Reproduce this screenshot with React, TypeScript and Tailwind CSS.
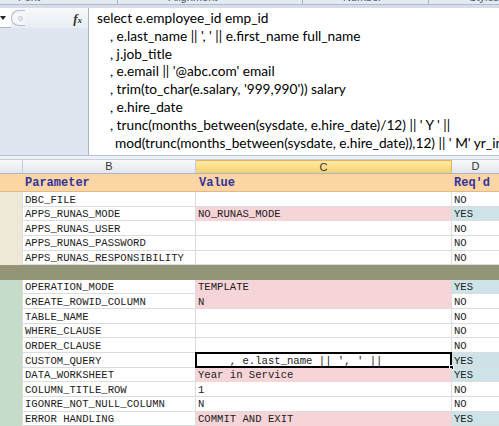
const mono = "font-['Liberation_Mono','Courier_New',monospace]";

type Row = {
  name: string;
  value?: string;
  pink?: boolean;
  req: "YES" | "NO";
  section: "a" | "b";
  selected?: boolean;
};

const rows: (Row | "bar")[] = [
  { name: "DBC_FILE", req: "NO", section: "a" },
  { name: "APPS_RUNAS_MODE", value: "NO_RUNAS_MODE", pink: true, req: "YES", section: "a" },
  { name: "APPS_RUNAS_USER", req: "NO", section: "a" },
  { name: "APPS_RUNAS_PASSWORD", req: "NO", section: "a" },
  { name: "APPS_RUNAS_RESPONSIBILITY", req: "NO", section: "a" },
  "bar",
  { name: "OPERATION_MODE", value: "TEMPLATE", pink: true, req: "YES", section: "b" },
  { name: "CREATE_ROWID_COLUMN", value: "N", pink: true, req: "NO", section: "b" },
  { name: "TABLE_NAME", req: "NO", section: "b" },
  { name: "WHERE_CLAUSE", req: "NO", section: "b" },
  { name: "ORDER_CLAUSE", req: "NO", section: "b" },
  { name: "CUSTOM_QUERY", value: "     , e.last_name || ', ' ||", req: "YES", section: "b", selected: true },
  { name: "DATA_WORKSHEET", value: "Year in Service", pink: true, req: "YES", section: "b" },
  { name: "COLUMN_TITLE_ROW", value: "1", req: "NO", section: "b" },
  { name: "IGONRE_NOT_NULL_COLUMN", value: "N", req: "NO", section: "b" },
  { name: "ERROR HANDLING", value: "COMMIT AND EXIT", pink: true, req: "YES", section: "b" },
];

const sql = [
  { t: "select e.employee_id emp_id", pl: "pl-0" },
  { t: ", e.last_name || ', ' || e.first_name full_name", pl: "pl-[13px]" },
  { t: ", j.job_title", pl: "pl-[13px]" },
  { t: ", e.email || '@abc.com' email", pl: "pl-[13px]" },
  { t: ", trim(to_char(e.salary, '999,990')) salary", pl: "pl-[13px]" },
  { t: ", e.hire_date", pl: "pl-[13px]" },
  { t: ", trunc(months_between(sysdate, e.hire_date)/12) || ' Y ' ||", pl: "pl-[13px]" },
  { t: "mod(trunc(months_between(sysdate, e.hire_date)),12) || ' M' yr_in_service", pl: "pl-[18px]" },
];

function FormulaBar() {
  return (
    <div className="flex h-[148px] shrink-0 border-b border-[#b6c2d2]">
      <div className="flex w-[88px] shrink-0 flex-col bg-[#dfe6ef]">
        <div className="flex h-[20px] items-stretch bg-gradient-to-b from-[#f7f9fb] to-[#e9eef4]">
          <div className="flex w-[11px] items-center border-b border-[#a9b5c4] bg-white">
            <span className="h-0 w-0 border-x-[3px] border-t-[4px] border-x-transparent border-t-[#222]" />
          </div>
          <div className="my-[2px] flex w-[14px] items-center rounded-l-full border-y border-l border-[#b3bccb] bg-[#f4f6f9] pl-[6px]">
            <span className="h-[5px] w-[5px] rounded-full border border-[#c4cad4] bg-[#e6eaf0]" />
          </div>
          <div className="flex flex-1 items-center justify-end pr-[6px]">
            <span className="font-['Liberation_Serif',serif] text-[13px] font-bold italic leading-none text-[#333]">
              f<span className="text-[9px]">x</span>
            </span>
          </div>
        </div>
      </div>
      <div className="flex-1 overflow-hidden whitespace-pre border-l border-[#aab6c6] bg-white pl-[8px] pt-[1px] font-['Lato','Noto_Sans',sans-serif] text-[13.7px] leading-[17.8px] text-black">
        {sql.map((l, i) => (
          <div key={i} className={l.pl}>
            {l.t}
          </div>
        ))}
      </div>
    </div>
  );
}

function ColHeaders() {
  const base =
    "flex shrink-0 items-center justify-center border-r border-[#c5ccd6] font-['Liberation_Sans',sans-serif] text-[11px] text-[#333]";
  return (
    <div className="flex h-[14px] shrink-0 border-b border-[#a9b7c9] bg-gradient-to-b from-[#f8f9fb] to-[#e3e7ed]">
      <div className={`${base} w-[23px]`} />
      <div className={`${base} w-[173px]`}>B</div>
      <div className={`${base} w-[256px] border-t border-[#e8b54e] bg-gradient-to-b from-[#fde9a9] to-[#f8d16e]`}>C</div>
      <div className={`${base} w-[48px]`}>D</div>
    </div>
  );
}

function DataRow({ r }: { r: Row }) {
  const grid = "border-[#dadcdf]";
  return (
    <div className={`flex h-[14.65px] shrink-0 ${mono} text-[10.6px] leading-none text-[#1c1c1c]`}>
      <div
        className={`w-[23px] shrink-0 border-r ${grid} ${
          r.section === "a" ? "bg-[#eee8d6]" : "bg-[#c6dbca]"
        }`}
      />
      <div className={`flex w-[173px] shrink-0 items-center border-b border-r ${grid} bg-white pl-[2px] pt-[2px]`}>
        {r.name}
      </div>
      <div
        className={`relative flex w-[256px] shrink-0 items-center whitespace-pre border-r ${grid} pl-[2px] pt-[2px] ${
          r.pink ? "border-b border-b-[#f6d5d8] bg-[#f6d5d8]" : "border-b bg-white"
        }`}
      >
        {r.value}
        {r.selected && (
          <>
            <span className="absolute -inset-[1px] border-2 border-black" />
            <span className="absolute -bottom-[3px] -right-[3px] h-[5px] w-[5px] border border-white bg-black" />
          </>
        )}
      </div>
      <div
        className={`flex w-[48px] shrink-0 items-center border-b pl-[2px] pt-[2px] ${grid} ${
          r.req === "YES" ? "bg-[#cde3e7]" : "bg-white"
        }`}
      >
        {r.req}
      </div>
    </div>
  );
}

export default function App() {
  return (
    <div className="flex h-[426px] w-[499px] flex-col overflow-hidden bg-white">
      <div className="relative h-[5px] shrink-0 overflow-hidden border-b border-[#b1bccb] bg-[#e4eaf2] font-['Liberation_Sans',sans-serif] text-[11px] leading-[11px] text-[#4d5866]">
        <div className="-mt-[8px] flex">
          <span className="ml-[18px] w-[105px]">Font</span>
          <span className="h-[12px] w-[1px] bg-[#a9b4c2]" />
          <span className="ml-[50px] w-[141px]">Alignment</span>
          <span className="h-[12px] w-[1px] bg-[#a9b4c2]" />
          <span className="ml-[40px] w-[90px]">Number</span>
          <span className="h-[12px] w-[1px] bg-[#a9b4c2]" />
          <span className="ml-[40px]">Styles</span>
        </div>
      </div>
      <div className="h-[3px] shrink-0 bg-[#d5dde8]" />
      <FormulaBar />
      <div className="h-[4px] shrink-0 border-b border-[#c7ced8] bg-[#eef1f5]" />
      <ColHeaders />
      <div className={`flex h-[18px] shrink-0 items-end border-b border-[#e3b987] bg-[#fcd5a5] pb-[2px] ${mono} text-[12px] font-bold leading-none text-[#333399]`}>
        <div className="w-[23px] shrink-0" />
        <div className="w-[173px] shrink-0 pl-[2px]">Parameter</div>
        <div className="w-[256px] shrink-0 pl-[3px]">Value</div>
        <div className="pl-[2px]">Req'd</div>
      </div>
      {rows.map((r, i) =>
        r === "bar" ? (
          <div key={i} className="h-[14.65px] shrink-0 bg-[#929475]" />
        ) : (
          <DataRow key={i} r={r} />
        )
      )}
    </div>
  );
}
